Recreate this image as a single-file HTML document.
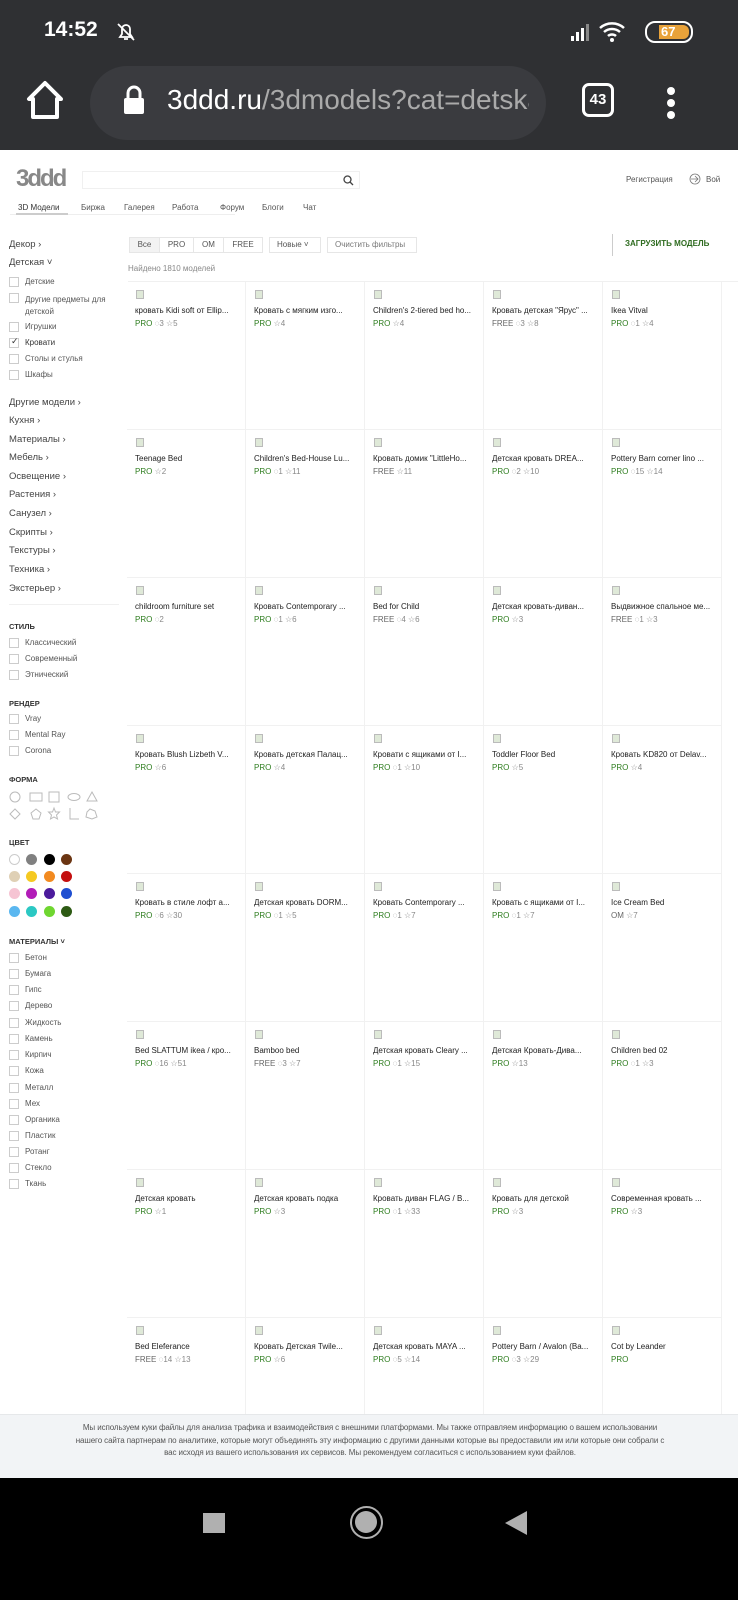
<!DOCTYPE html>
<html><head><meta charset="utf-8"><style>
*{margin:0;padding:0;box-sizing:border-box}
body{width:738px;height:1600px;position:relative;overflow:hidden;background:#fff;font-family:"Liberation Sans",sans-serif;color:#333}
.a{position:absolute;white-space:nowrap}
.sb{font-size:9.5px;color:#444}
.cb{position:absolute;width:10px;height:10px;border:1px solid #ccc;background:#fff}
.sm{font-size:8px;color:#555}
.h{font-size:7.5px;color:#333;font-weight:bold}
.card{position:absolute;width:119px;height:148px;border-right:1px solid #f1f1f1;border-bottom:1px solid #f1f1f1}
.card .ic{position:absolute;left:9px;top:8px;width:8px;height:9px;border:1px solid #bbb;background:#dfe9d8}
.card .t{position:absolute;left:8px;top:24px;font-size:8px;color:#222;white-space:nowrap}
.card .m{position:absolute;left:8px;top:37px;font-size:8px;color:#888;white-space:nowrap}
.card .m b{font-weight:normal;color:#2e7d1f}
.card .m i{font-style:normal;color:#666}
.dot{position:absolute;width:11px;height:11px;border-radius:50%}
</style></head><body>
<div class="a" style="left:0;top:0;width:738px;height:150px;background:#2f3033"></div>
<div class="a" style="left:44px;top:18px;font-size:21px;font-weight:bold;color:#fff">14:52</div>
<svg class="a" style="left:114px;top:20px" width="24" height="24" viewBox="0 0 24 24"><path d="M6 17h12l-2-3v-5a4 4 0 0 0-8 0v5z M10 19h4" stroke="#fff" stroke-width="1.8" fill="none"/><path d="M4 4l16 16" stroke="#fff" stroke-width="1.8"/></svg>
<svg class="a" style="left:570px;top:22px" width="20" height="20"><rect x="1" y="14" width="3" height="5" fill="#fff"/><rect x="6" y="10" width="3" height="9" fill="#fff"/><rect x="11" y="6" width="3" height="13" fill="#fff"/><rect x="16" y="2" width="3" height="17" fill="#888"/></svg>
<svg class="a" style="left:598px;top:20px" width="30" height="24" viewBox="0 0 30 24"><path d="M2 8a18 18 0 0 1 24 0M6 12a12 12 0 0 1 16 0M10 16a6 6 0 0 1 8 0" stroke="#fff" stroke-width="2.5" fill="none"/><circle cx="14" cy="20" r="2" fill="#fff"/></svg>
<div class="a" style="left:645px;top:21px;width:48px;height:22px;border:2px solid #fff;border-radius:10px"><div style="position:absolute;left:12px;top:2px;width:30px;height:14px;background:#e8a23a;border-radius:0 6px 6px 0"></div><div style="position:absolute;left:14px;top:1px;font-size:13px;font-weight:bold;color:#fff">67</div></div>
<svg class="a" style="left:26px;top:80px" width="38" height="40" viewBox="0 0 38 40"><path d="M19 3L3 19h4v18h24V19h4z" stroke="#fff" stroke-width="4" fill="none" stroke-linejoin="round"/></svg>
<div class="a" style="left:90px;top:66px;width:456px;height:74px;background:#3a3b3f;border-radius:37px"></div>
<svg class="a" style="left:122px;top:84px" width="24" height="34"><path d="M6 14V9a6 6 0 0 1 12 0v5" stroke="#fff" stroke-width="3" fill="none"/><rect x="2" y="14" width="20" height="16" rx="2" fill="#fff"/></svg>
<div class="a" style="left:167px;top:84px;font-size:28px;color:#fff;width:362px;overflow:hidden">3ddd.ru<span style="color:#aaa">/3dmodels?cat=detskaya</span></div>
<div class="a" style="left:582px;top:83px;width:32px;height:34px;border:3.5px solid #fff;border-radius:7px;font-size:15px;font-weight:bold;color:#fff;text-align:center;line-height:27px">43</div>
<div class="a" style="left:667px;top:87px;width:8px;height:8px;border-radius:50%;background:#fff"></div>
<div class="a" style="left:667px;top:99px;width:8px;height:8px;border-radius:50%;background:#fff"></div>
<div class="a" style="left:667px;top:111px;width:8px;height:8px;border-radius:50%;background:#fff"></div>

<div class="a" style="left:16px;top:165px;font-size:24px;font-weight:bold;color:#888;letter-spacing:-2px">3ddd</div>
<div class="a" style="left:82px;top:171px;width:278px;height:18px;border:1px solid #f0f0f0"></div>
<svg class="a" style="left:343px;top:175px" width="11" height="11"><circle cx="4.5" cy="4.5" r="3.5" stroke="#444" stroke-width="1.3" fill="none"/><path d="M7 7l3 3" stroke="#444" stroke-width="1.3"/></svg>
<div class="a sm" style="left:626px;top:175px;color:#555">Регистрация</div>
<svg class="a" style="left:689px;top:173px" width="12" height="12"><circle cx="6" cy="6" r="5" stroke="#777" fill="none" stroke-width=".8"/><path d="M2 6h7M6 3l3 3-3 3" stroke="#777" fill="none" stroke-width=".8"/></svg>
<div class="a sm" style="left:706px;top:175px">Вой</div>
<div class="a sm" style="left:18px;top:203px;color:#333">3D Модели</div>
<div class="a sm" style="left:81px;top:203px">Биржа</div>
<div class="a sm" style="left:124px;top:203px">Галерея</div>
<div class="a sm" style="left:172px;top:203px">Работа</div>
<div class="a sm" style="left:220px;top:203px">Форум</div>
<div class="a sm" style="left:262px;top:203px">Блоги</div>
<div class="a sm" style="left:303px;top:203px">Чат</div>
<div class="a" style="left:10px;top:214px;width:225px;height:1px;background:#eee"></div>
<div class="a" style="left:16px;top:213px;width:52px;height:2px;background:#ccc"></div>

<div class="a" style="left:129px;top:237px;width:134px;height:16px;border:1px solid #e6e6e6;font-size:8px;color:#555;display:flex"><span style="width:30px;text-align:center;line-height:14px;background:#f3f3f3;border-right:1px solid #e6e6e6">Все</span><span style="width:34px;text-align:center;line-height:14px;border-right:1px solid #e6e6e6">PRO</span><span style="width:30px;text-align:center;line-height:14px;border-right:1px solid #e6e6e6">OM</span><span style="width:38px;text-align:center;line-height:14px">FREE</span></div>
<div class="a" style="left:269px;top:237px;width:52px;height:16px;border:1px solid #e6e6e6;font-size:8px;color:#555;line-height:14px;padding-left:7px">Новые ˅</div>
<div class="a" style="left:327px;top:237px;width:90px;height:16px;border:1px solid #e6e6e6;font-size:8px;color:#777;line-height:14px;padding-left:7px">Очистить фильтры</div>
<div class="a" style="left:612px;top:234px;width:110px;height:22px;border-left:1px solid #ccc;font-size:8px;font-weight:bold;color:#2e6b1f;line-height:20px;padding-left:12px">ЗАГРУЗИТЬ МОДЕЛЬ</div>
<div class="a" style="left:128px;top:264px;font-size:8px;color:#888">Найдено 1810 моделей</div>

<div class="a sb" style="left:9px;top:239px">Декор ›</div>
<div class="a sb" style="left:9px;top:257px">Детская ˅</div>
<div class="cb" style="left:9px;top:277px"></div><div class="a sm" style="left:25px;top:277px">Детские</div>
<div class="cb" style="left:9px;top:293px"></div><div class="a sm" style="left:25px;top:294px;line-height:12px">Другие предметы для<br>детской</div>
<div class="cb" style="left:9px;top:322px"></div><div class="a sm" style="left:25px;top:322px">Игрушки</div>
<div class="cb" style="left:9px;top:338px"><span style="position:absolute;left:1px;top:-3px;font-size:9px">✓</span></div><div class="a sm" style="left:25px;top:338px;color:#333">Кровати</div>
<div class="cb" style="left:9px;top:354px"></div><div class="a sm" style="left:25px;top:354px">Столы и стулья</div>
<div class="cb" style="left:9px;top:370px"></div><div class="a sm" style="left:25px;top:370px">Шкафы</div>
<div class="a sb" style="left:9px;top:397px">Другие модели ›</div>
<div class="a sb" style="left:9px;top:415px">Кухня ›</div>
<div class="a sb" style="left:9px;top:434px">Материалы ›</div>
<div class="a sb" style="left:9px;top:452px">Мебель ›</div>
<div class="a sb" style="left:9px;top:471px">Освещение ›</div>
<div class="a sb" style="left:9px;top:489px">Растения ›</div>
<div class="a sb" style="left:9px;top:508px">Санузел ›</div>
<div class="a sb" style="left:9px;top:527px">Скрипты ›</div>
<div class="a sb" style="left:9px;top:545px">Текстуры ›</div>
<div class="a sb" style="left:9px;top:564px">Техника ›</div>
<div class="a sb" style="left:9px;top:583px">Экстерьер ›</div>
<div class="a" style="left:9px;top:604px;width:110px;height:1px;background:#f0f0f0"></div>
<div class="a h" style="left:9px;top:622px">СТИЛЬ</div>
<div class="cb" style="left:9px;top:638px"></div><div class="a sm" style="left:25px;top:638px">Классический</div>
<div class="cb" style="left:9px;top:654px"></div><div class="a sm" style="left:25px;top:654px">Современный</div>
<div class="cb" style="left:9px;top:670px"></div><div class="a sm" style="left:25px;top:670px">Этнический</div>
<div class="a h" style="left:9px;top:699px">РЕНДЕР</div>
<div class="cb" style="left:9px;top:714px"></div><div class="a sm" style="left:25px;top:714px">Vray</div>
<div class="cb" style="left:9px;top:730px"></div><div class="a sm" style="left:25px;top:730px">Mental Ray</div>
<div class="cb" style="left:9px;top:746px"></div><div class="a sm" style="left:25px;top:746px">Corona</div>
<div class="a h" style="left:9px;top:775px">ФОРМА</div>
<svg class="a" style="left:8px;top:790px" width="95" height="30" fill="none" stroke="#bbb" stroke-width="1"><circle cx="7" cy="7" r="5"/><path d="M22 3h12v8H22z"/><rect x="41" y="2" width="10" height="10"/><ellipse cx="66" cy="7" rx="6" ry="3.5"/><path d="M84 2l5 9h-10z"/><path d="M7 19l5 5-5 5-5-5z"/><path d="M28 19l5 4-2 6h-6l-2-6z"/><path d="M46 18l1.5 4h4l-3 3 1 4-3.5-2-3.5 2 1-4-3-3h4z"/><path d="M62 18v11h9"/><path d="M82 19l5 2 2 6-5 2-6-2 1-5z"/></svg>
<div class="a h" style="left:9px;top:838px">ЦВЕТ</div>
<div class="dot" style="left:9px;top:854px;border:1px solid #ccc;background:#fff"></div><div class="dot" style="left:26px;top:854px;background:#808080"></div><div class="dot" style="left:44px;top:854px;background:#000"></div><div class="dot" style="left:61px;top:854px;background:#6b3512"></div>
<div class="dot" style="left:9px;top:871px;background:#dfd0b5"></div><div class="dot" style="left:26px;top:871px;background:#f5c921"></div><div class="dot" style="left:44px;top:871px;background:#f28a20"></div><div class="dot" style="left:61px;top:871px;background:#c40f0f"></div>
<div class="dot" style="left:9px;top:888px;background:#f6c4d3"></div><div class="dot" style="left:26px;top:888px;background:#b21cb8"></div><div class="dot" style="left:44px;top:888px;background:#4c1b9c"></div><div class="dot" style="left:61px;top:888px;background:#1f4fd1"></div>
<div class="dot" style="left:9px;top:906px;background:#5ab7f0"></div><div class="dot" style="left:26px;top:906px;background:#2bc8c3"></div><div class="dot" style="left:44px;top:906px;background:#6fd630"></div><div class="dot" style="left:61px;top:906px;background:#2d5a14"></div>
<div class="a h" style="left:9px;top:937px">МАТЕРИАЛЫ ˅</div>
<div class="cb" style="left:9px;top:953px"></div><div class="a sm" style="left:25px;top:953px">Бетон</div>
<div class="cb" style="left:9px;top:969px"></div><div class="a sm" style="left:25px;top:969px">Бумага</div>
<div class="cb" style="left:9px;top:985px"></div><div class="a sm" style="left:25px;top:985px">Гипс</div>
<div class="cb" style="left:9px;top:1001px"></div><div class="a sm" style="left:25px;top:1001px">Дерево</div>
<div class="cb" style="left:9px;top:1018px"></div><div class="a sm" style="left:25px;top:1018px">Жидкость</div>
<div class="cb" style="left:9px;top:1034px"></div><div class="a sm" style="left:25px;top:1034px">Камень</div>
<div class="cb" style="left:9px;top:1050px"></div><div class="a sm" style="left:25px;top:1050px">Кирпич</div>
<div class="cb" style="left:9px;top:1066px"></div><div class="a sm" style="left:25px;top:1066px">Кожа</div>
<div class="cb" style="left:9px;top:1083px"></div><div class="a sm" style="left:25px;top:1083px">Металл</div>
<div class="cb" style="left:9px;top:1099px"></div><div class="a sm" style="left:25px;top:1099px">Мех</div>
<div class="cb" style="left:9px;top:1115px"></div><div class="a sm" style="left:25px;top:1115px">Органика</div>
<div class="cb" style="left:9px;top:1131px"></div><div class="a sm" style="left:25px;top:1131px">Пластик</div>
<div class="cb" style="left:9px;top:1147px"></div><div class="a sm" style="left:25px;top:1147px">Ротанг</div>
<div class="cb" style="left:9px;top:1163px"></div><div class="a sm" style="left:25px;top:1163px">Стекло</div>
<div class="cb" style="left:9px;top:1179px"></div><div class="a sm" style="left:25px;top:1179px">Ткань</div>

<div class="a" style="left:128px;top:281px;width:610px;height:1px;background:#f0f0f0"></div>
<div class="card" style="left:127px;top:282px"><div class="ic"></div><div class="t">кровать Kidi soft от Ellip...</div><div class="m"><b>PRO</b> ◌3 ☆5</div></div>
<div class="card" style="left:246px;top:282px"><div class="ic"></div><div class="t">Кровать с мягким изго...</div><div class="m"><b>PRO</b> ☆4</div></div>
<div class="card" style="left:365px;top:282px"><div class="ic"></div><div class="t">Children's 2-tiered bed ho...</div><div class="m"><b>PRO</b> ☆4</div></div>
<div class="card" style="left:484px;top:282px"><div class="ic"></div><div class="t">Кровать детская "Ярус" ...</div><div class="m"><i>FREE</i> ◌3 ☆8</div></div>
<div class="card" style="left:603px;top:282px"><div class="ic"></div><div class="t">Ikea Vitval</div><div class="m"><b>PRO</b> ◌1 ☆4</div></div>
<div class="card" style="left:127px;top:430px"><div class="ic"></div><div class="t">Teenage Bed</div><div class="m"><b>PRO</b> ☆2</div></div>
<div class="card" style="left:246px;top:430px"><div class="ic"></div><div class="t">Children's Bed-House Lu...</div><div class="m"><b>PRO</b> ◌1 ☆11</div></div>
<div class="card" style="left:365px;top:430px"><div class="ic"></div><div class="t">Кровать домик "LittleHo...</div><div class="m"><i>FREE</i> ☆11</div></div>
<div class="card" style="left:484px;top:430px"><div class="ic"></div><div class="t">Детская кровать DREA...</div><div class="m"><b>PRO</b> ◌2 ☆10</div></div>
<div class="card" style="left:603px;top:430px"><div class="ic"></div><div class="t">Pottery Barn corner lino ...</div><div class="m"><b>PRO</b> ◌15 ☆14</div></div>
<div class="card" style="left:127px;top:578px"><div class="ic"></div><div class="t">childroom furniture set</div><div class="m"><b>PRO</b> ◌2</div></div>
<div class="card" style="left:246px;top:578px"><div class="ic"></div><div class="t">Кровать Contemporary ...</div><div class="m"><b>PRO</b> ◌1 ☆6</div></div>
<div class="card" style="left:365px;top:578px"><div class="ic"></div><div class="t">Bed for Child</div><div class="m"><i>FREE</i> ◌4 ☆6</div></div>
<div class="card" style="left:484px;top:578px"><div class="ic"></div><div class="t">Детская кровать-диван...</div><div class="m"><b>PRO</b> ☆3</div></div>
<div class="card" style="left:603px;top:578px"><div class="ic"></div><div class="t">Выдвижное спальное ме...</div><div class="m"><i>FREE</i> ◌1 ☆3</div></div>
<div class="card" style="left:127px;top:726px"><div class="ic"></div><div class="t">Кровать Blush Lizbeth V...</div><div class="m"><b>PRO</b> ☆6</div></div>
<div class="card" style="left:246px;top:726px"><div class="ic"></div><div class="t">Кровать детская Палац...</div><div class="m"><b>PRO</b> ☆4</div></div>
<div class="card" style="left:365px;top:726px"><div class="ic"></div><div class="t">Кровати с ящиками от I...</div><div class="m"><b>PRO</b> ◌1 ☆10</div></div>
<div class="card" style="left:484px;top:726px"><div class="ic"></div><div class="t">Toddler Floor Bed</div><div class="m"><b>PRO</b> ☆5</div></div>
<div class="card" style="left:603px;top:726px"><div class="ic"></div><div class="t">Кровать KD820 от Delav...</div><div class="m"><b>PRO</b> ☆4</div></div>
<div class="card" style="left:127px;top:874px"><div class="ic"></div><div class="t">Кровать в стиле лофт а...</div><div class="m"><b>PRO</b> ◌6 ☆30</div></div>
<div class="card" style="left:246px;top:874px"><div class="ic"></div><div class="t">Детская кровать DORM...</div><div class="m"><b>PRO</b> ◌1 ☆5</div></div>
<div class="card" style="left:365px;top:874px"><div class="ic"></div><div class="t">Кровать Contemporary ...</div><div class="m"><b>PRO</b> ◌1 ☆7</div></div>
<div class="card" style="left:484px;top:874px"><div class="ic"></div><div class="t">Кровать с ящиками от I...</div><div class="m"><b>PRO</b> ◌1 ☆7</div></div>
<div class="card" style="left:603px;top:874px"><div class="ic"></div><div class="t">Ice Cream Bed</div><div class="m"><i>OM</i> ☆7</div></div>
<div class="card" style="left:127px;top:1022px"><div class="ic"></div><div class="t">Bed SLATTUM ikea / кро...</div><div class="m"><b>PRO</b> ◌16 ☆51</div></div>
<div class="card" style="left:246px;top:1022px"><div class="ic"></div><div class="t">Bamboo bed</div><div class="m"><i>FREE</i> ◌3 ☆7</div></div>
<div class="card" style="left:365px;top:1022px"><div class="ic"></div><div class="t">Детская кровать Cleary ...</div><div class="m"><b>PRO</b> ◌1 ☆15</div></div>
<div class="card" style="left:484px;top:1022px"><div class="ic"></div><div class="t">Детская Кровать-Дива...</div><div class="m"><b>PRO</b> ☆13</div></div>
<div class="card" style="left:603px;top:1022px"><div class="ic"></div><div class="t">Children bed 02</div><div class="m"><b>PRO</b> ◌1 ☆3</div></div>
<div class="card" style="left:127px;top:1170px"><div class="ic"></div><div class="t">Детская кровать</div><div class="m"><b>PRO</b> ☆1</div></div>
<div class="card" style="left:246px;top:1170px"><div class="ic"></div><div class="t">Детская кровать подка</div><div class="m"><b>PRO</b> ☆3</div></div>
<div class="card" style="left:365px;top:1170px"><div class="ic"></div><div class="t">Кровать диван FLAG / B...</div><div class="m"><b>PRO</b> ◌1 ☆33</div></div>
<div class="card" style="left:484px;top:1170px"><div class="ic"></div><div class="t">Кровать для детской</div><div class="m"><b>PRO</b> ☆3</div></div>
<div class="card" style="left:603px;top:1170px"><div class="ic"></div><div class="t">Современная кровать ...</div><div class="m"><b>PRO</b> ☆3</div></div>
<div class="card" style="left:127px;top:1318px"><div class="ic"></div><div class="t">Bed Eleferance</div><div class="m"><i>FREE</i> ◌14 ☆13</div></div>
<div class="card" style="left:246px;top:1318px"><div class="ic"></div><div class="t">Кровать Детская Twile...</div><div class="m"><b>PRO</b> ☆6</div></div>
<div class="card" style="left:365px;top:1318px"><div class="ic"></div><div class="t">Детская кровать MAYA ...</div><div class="m"><b>PRO</b> ◌5 ☆14</div></div>
<div class="card" style="left:484px;top:1318px"><div class="ic"></div><div class="t">Pottery Barn / Avalon (Ba...</div><div class="m"><b>PRO</b> ◌3 ☆29</div></div>
<div class="card" style="left:603px;top:1318px"><div class="ic"></div><div class="t">Cot by Leander</div><div class="m"><b>PRO</b></div></div>

<div class="a" style="left:0;top:1414px;width:738px;height:64px;background:#f2f4f6;border-top:1px solid #e6e8ea"></div>
<div class="a" style="left:75px;top:1422px;width:590px;font-size:8px;line-height:12.5px;color:#555;text-align:center;white-space:normal;letter-spacing:-0.1px">Мы используем куки файлы для анализа трафика и взаимодействия с внешними платформами. Мы также отправляем информацию о вашем использовании нашего сайта партнерам по аналитике, которые могут объединять эту информацию с другими данными которые вы предоставили им или которые они собрали с вас исходя из вашего использования их сервисов. Мы рекомендуем согласиться с использованием куки файлов.</div>
<div class="a" style="left:0;top:1478px;width:738px;height:122px;background:#000"></div>
<div class="a" style="left:203px;top:1513px;width:22px;height:20px;background:#b0b0b0"></div>
<div class="a" style="left:350px;top:1506px;width:33px;height:33px;border:2.5px solid #b0b0b0;border-radius:50%"><div style="position:absolute;left:3px;top:3px;width:22px;height:22px;border-radius:50%;background:#b0b0b0"></div></div>
<svg class="a" style="left:505px;top:1511px" width="22" height="24"><path d="M22 0v24L0 12z" fill="#b0b0b0"/></svg>
</body></html>
